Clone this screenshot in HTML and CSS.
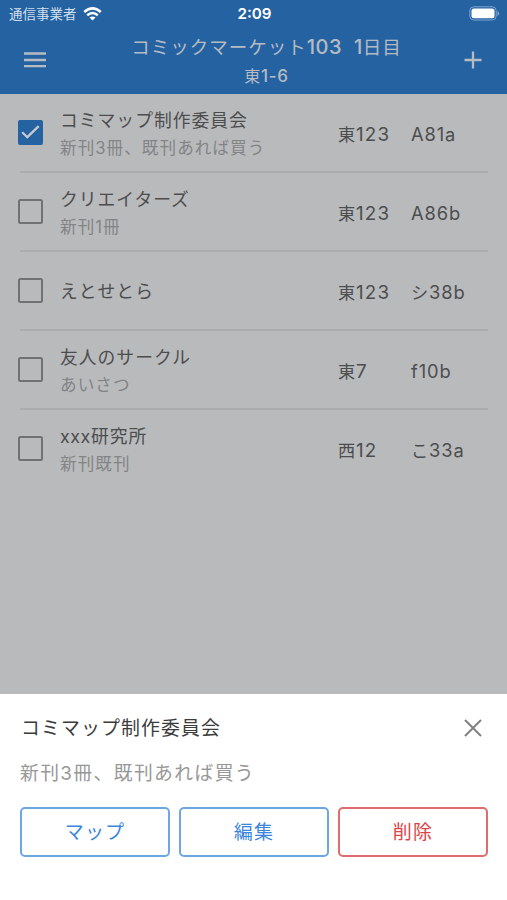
FILE: index.html
```
<!DOCTYPE html>
<html lang="ja">
<head>
<meta charset="utf-8">
<title>コミマップ</title>
<link rel="stylesheet" href="styles.css">
</head>
<body>
<div class="app">
  <header class="header">
    <div class="status">
      <div class="carrier"><span>通信事業者</span>
        <svg class="wifi" width="19" height="14" viewBox="0 0 19 14"><g fill="none" stroke="#fff" stroke-width="2.5"><path d="M1.200 5Q9.500-2.200 17.800 5"/><path d="M4.200 8.300Q9.500 3.700 14.800 8.300"/></g><path d="M6.500 10.600Q9.500 8.200 12.500 10.600L9.500 13.600Z" fill="#fff"/></svg>
      </div>
      <span class="time">2:09</span>
      <svg class="battery" width="31" height="15" viewBox="0 0 31 15"><rect x=".8" y=".8" width="26.400" height="13.200" rx="4" fill="none" stroke="#7fa5ce" stroke-width="1"/><rect x="2.500" y="2.500" width="23" height="9.800" rx="2.500" fill="#fff"/><path d="M28.500 5v5q1.700-.8 1.700-2.500T28.500 5Z" fill="#7fa5ce"/></svg>
    </div>
    <div class="toolbar">
      <svg class="menu" width="24" height="18" viewBox="0 0 24 18"><path d="M1 2.500h22M1 9h22M1 15.200h22" stroke="#b6bbc2" stroke-width="2.300"/></svg>
      <div class="heading">
        <div class="event">コミックマーケット<b>103</b><b class="day">1</b>日目</div>
        <div class="area">東<b>1-6</b></div>
      </div>
      <svg class="add" width="20" height="20" viewBox="0 0 20 20"><path d="M10 1.500v17M1.500 10h17" stroke="#b6bbc2" stroke-width="2.300"/></svg>
    </div>
  </header>
  <main class="list">
    <div class="row">
      <span class="check checked"><svg width="25" height="25" viewBox="0 0 25 25"><path d="M4.200 12.200l5.100 5L20.700 6.200" fill="none" stroke="#c5c9cf" stroke-width="2.300"/></svg></span>
      <div class="info"><div class="name">コミマップ制作委員会</div><div class="note">新刊3冊、既刊あれば買う</div></div>
      <span class="hall">東<b>123</b></span><span class="space"><b>A81a</b></span>
    </div>
    <div class="row">
      <span class="check"></span>
      <div class="info"><div class="name">クリエイターズ</div><div class="note">新刊1冊</div></div>
      <span class="hall">東<b>123</b></span><span class="space"><b>A86b</b></span>
    </div>
    <div class="row">
      <span class="check"></span>
      <div class="info"><div class="name">えとせとら</div></div>
      <span class="hall">東<b>123</b></span><span class="space">シ<b>38b</b></span>
    </div>
    <div class="row">
      <span class="check"></span>
      <div class="info"><div class="name">友人のサークル</div><div class="note">あいさつ</div></div>
      <span class="hall">東<b>7</b></span><span class="space"><b>f10b</b></span>
    </div>
    <div class="row">
      <span class="check"></span>
      <div class="info"><div class="name"><span class="latin">xxx</span>研究所</div><div class="note">新刊既刊</div></div>
      <span class="hall">西<b>12</b></span><span class="space">こ<b>33a</b></span>
    </div>
  </main>
  <section class="sheet">
    <div class="sheet-head">
      <div class="sheet-title">コミマップ制作委員会</div>
      <svg class="close" width="20" height="20" viewBox="0 0 20 20"><path d="M2 2l16 16M18 2L2 18" stroke="#808080" stroke-width="2"/></svg>
    </div>
    <div class="sheet-note">新刊3冊、既刊あれば買う</div>
    <div class="actions">
      <div class="button">マップ</div>
      <div class="button">編集</div>
      <div class="button danger">削除</div>
    </div>
  </section>
</div>
</body>
</html>
```
FILE: styles.css
```
* { box-sizing: border-box; }
body {
  margin: 0;
  font-family: Inter, "Noto Sans CJK JP", sans-serif;
  background: #b9babc;
}
.app { width: 507px; height: 900px; display: flex; flex-direction: column; overflow: hidden; white-space: nowrap; }
.header { height: 94px; background: #2462a2; color: #b6bbc2; flex: none; }
.status { height: 28px; display: grid; grid-template-columns: 1fr auto 1fr; align-items: center; padding: 0 7px 0 9px; color: #fff; }
.carrier { display: flex; align-items: center; gap: 6px; font-size: 13.5px; line-height: 20px; color: #d3dfec; }
.wifi { margin-top: -1px; }
.time { font-size: 15.200px; font-weight: 600; line-height: 20px; }
.battery { justify-self: end; margin-top: -1px; }
.toolbar { height: 66px; display: grid; grid-template-columns: 24px 1fr 20px; padding: 0 24px 0 23px; }
.menu { margin-top: 23px; }
.add { margin-top: 22px; }
.heading { text-align: center; padding: 5px 0 0 23px; }
.event { font-size: 18.5px; line-height: 28px; letter-spacing: 1px; }
.event b, .area b { font-weight: 500; }
.event b { font-size: 20px; letter-spacing: .5px; }
.event .day { margin-left: 12px; }
.area { font-size: 16px; line-height: 28px; letter-spacing: .7px; padding-top: 1px; }
.area b { font-size: 17px; }
.list { flex: 1; padding: 0 19px 0 18px; }
.row { height: 79px; display: grid; grid-template-columns: 25px 1fr 73px 77px; align-items: center; position: relative; color: #4c4d4f; }
.row:not(:last-child)::after { content: ""; position: absolute; left: 2px; right: 0; bottom: 0; height: 2px; background: #abacae; }
.check { width: 25px; height: 25px; margin-top: -2px; border: 2px solid #707173; border-radius: 2.500px; }
.checked { border: 0; background: #2462a2; border-radius: 2px; }
.checked svg { display: block; }
.info { padding-left: 17px; }
.name { font-size: 17.8px; line-height: 28px; letter-spacing: 1px; }
.latin { letter-spacing: .6px; }
.note { font-size: 16.6px; line-height: 26px; letter-spacing: 1.050px; color: #838486; }
.hall, .space { font-size: 17.2px; line-height: 28px; letter-spacing: .9px; padding-top: 1px; }
.hall { padding-top: 3px; }
.hall b, .space b { font-weight: 400; font-size: 18.3px; letter-spacing: .9px; }
.hall b { font-size: 18.8px; letter-spacing: 1.100px; }
.sheet { height: 206px; background: #fff; padding: 21px 19px 0 20px; flex: none; }
.sheet-head { height: 28px; display: flex; justify-content: space-between; align-items: center; padding-right: 5px; }
.close { margin-top: -2px; }
.sheet-title { font-size: 18.9px; letter-spacing: 1.1px; line-height: 28px; color: #3c3c3c; padding-left: 1px; }
.sheet-note { margin-top: 17px; font-size: 18.8px; letter-spacing: 1.4px; line-height: 28px; color: #989898; }
.actions { display: grid; grid-template-columns: repeat(3, 1fr); gap: 9px; margin-top: 19px; }
.button { height: 50px; border: 2px solid #6ca6e4; border-radius: 5px; color: #3a86dc; font-size: 19px; letter-spacing: 1.200px; line-height: 47px; text-align: center; }
.danger { color: #dc4345; border-color: #e06b6c; }
```
